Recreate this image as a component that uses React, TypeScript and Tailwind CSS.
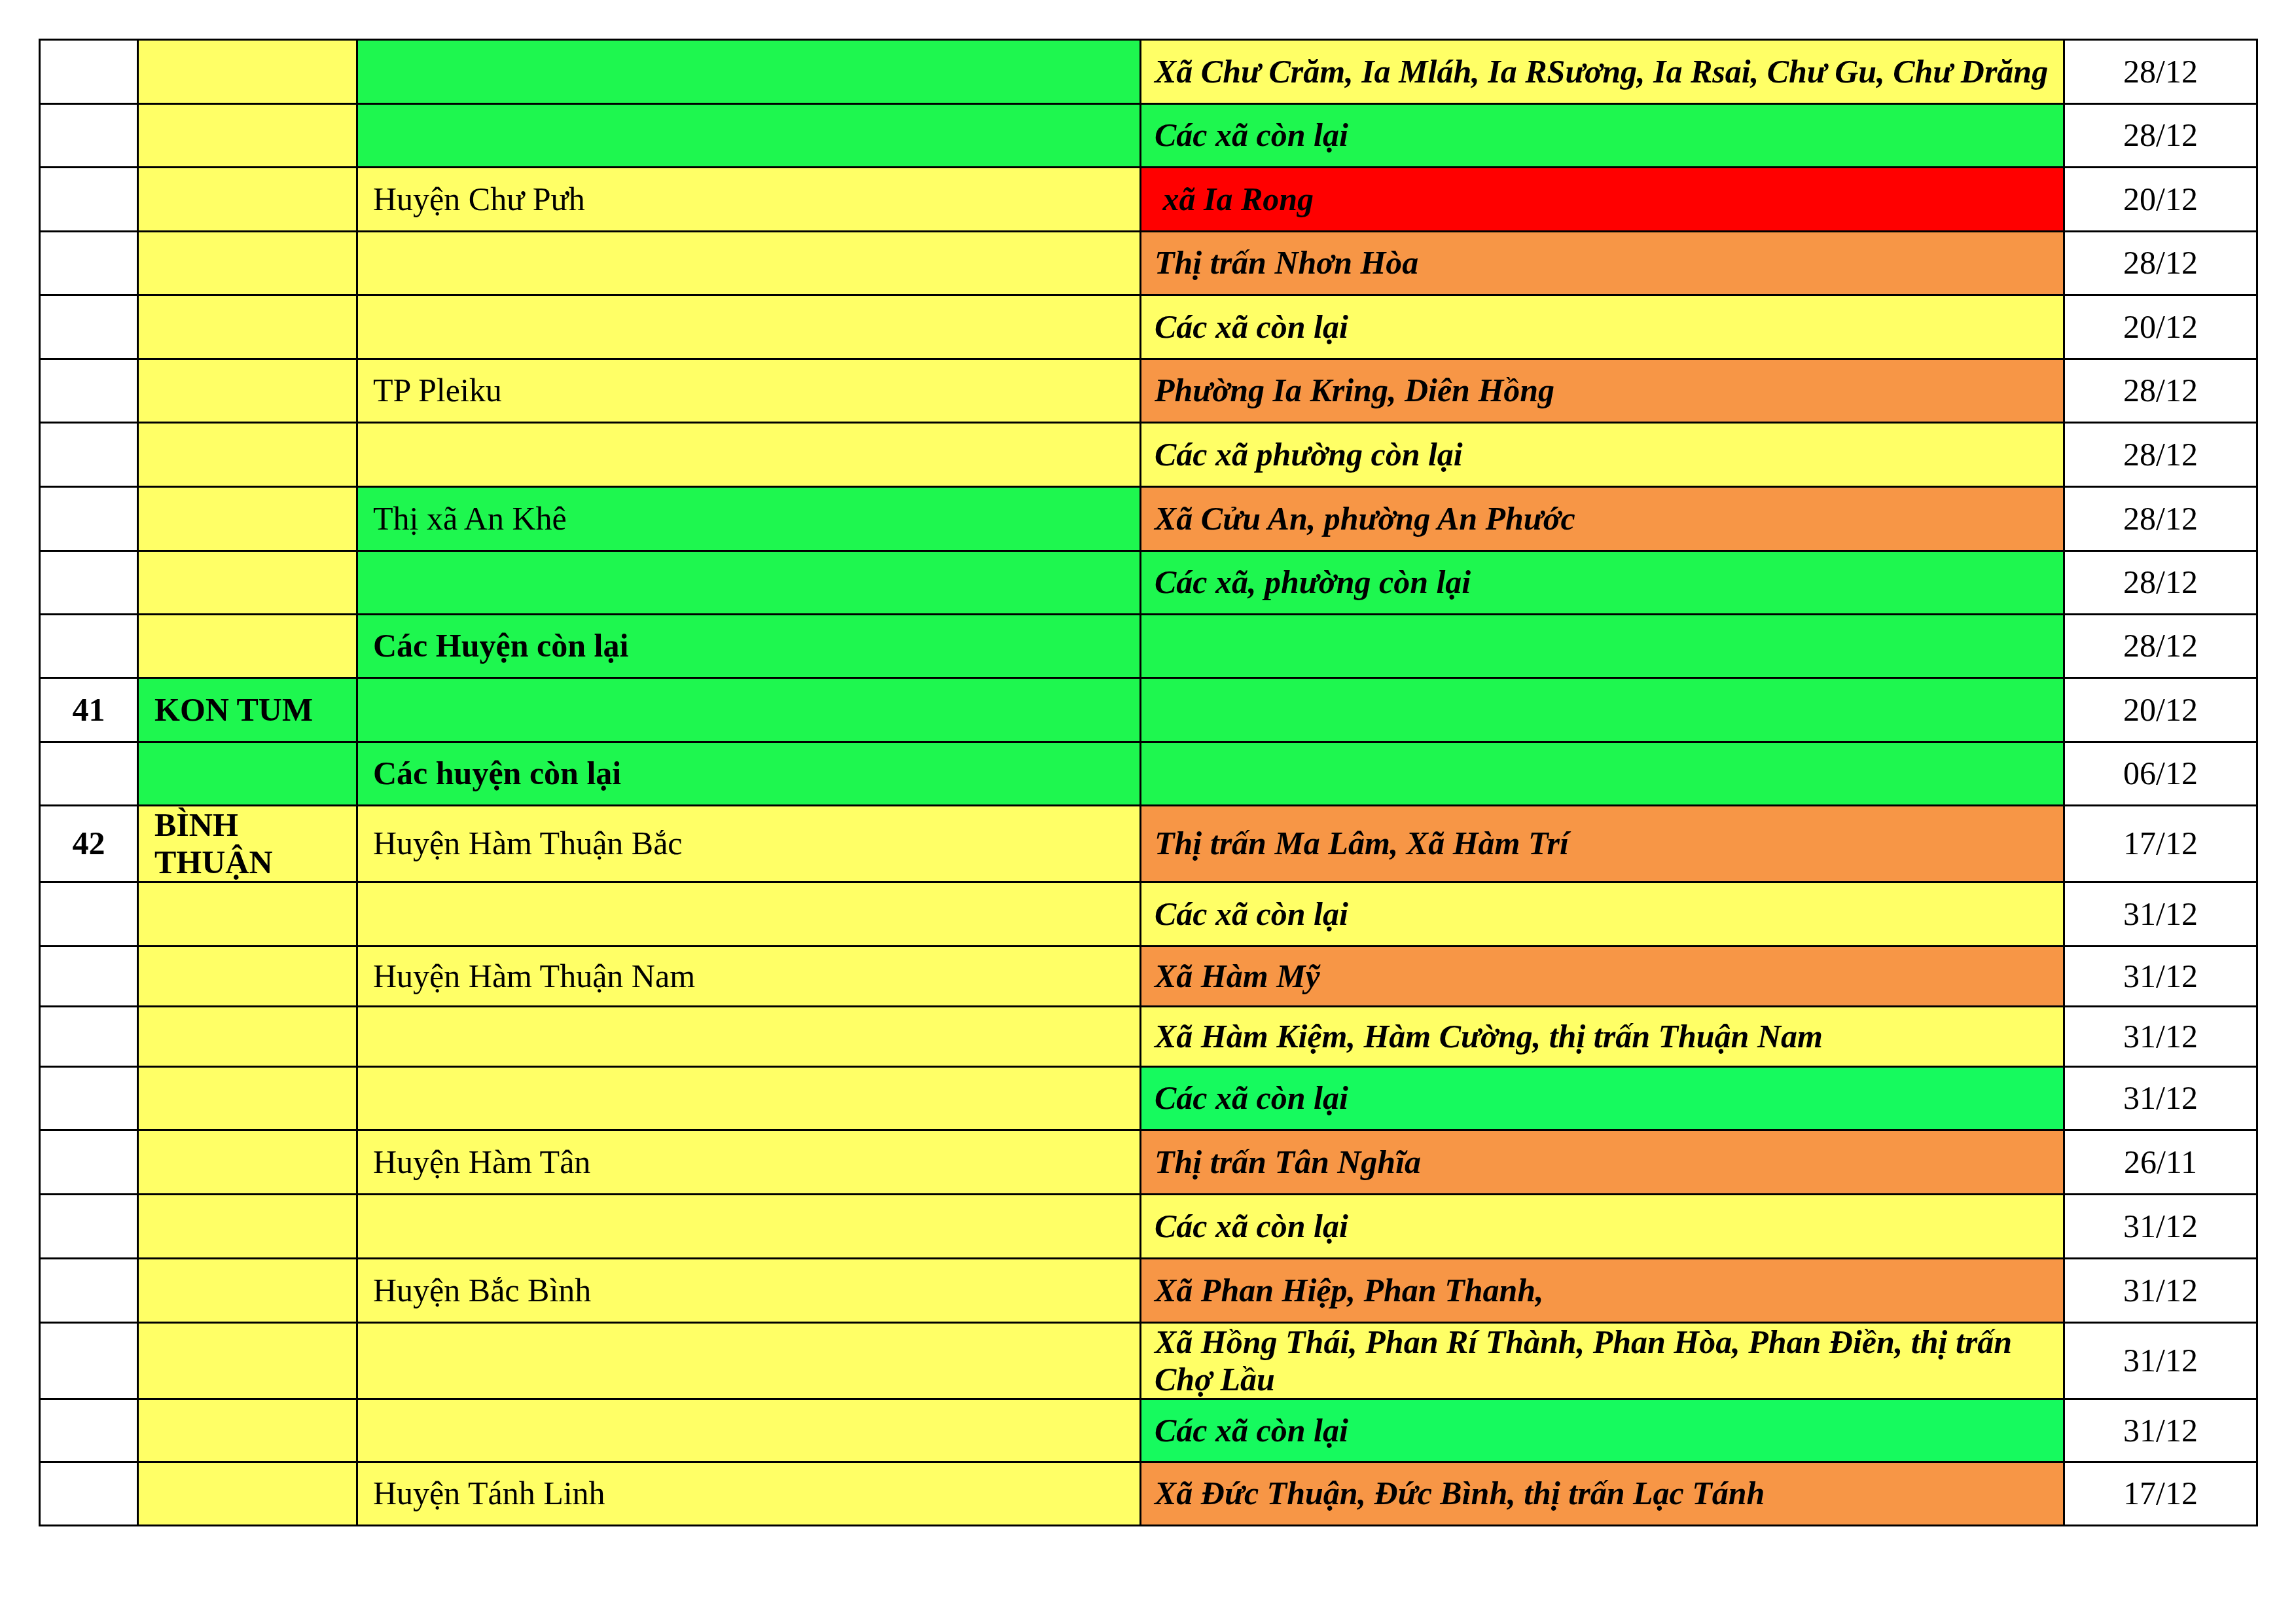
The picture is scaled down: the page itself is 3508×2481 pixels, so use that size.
import React from "react";

type Tone = "w" | "y" | "g" | "g2" | "o" | "r";

const bg: Record<Tone, string> = {
  w: "bg-white",
  y: "bg-[#ffff66]",
  g: "bg-[#1ef74f]",
  g2: "bg-[#16fa5e]",
  o: "bg-[#f79646]",
  r: "bg-[#ff0000]",
};

type Row = {
  h: string;
  no?: string;
  c2: Tone;
  prov?: React.ReactNode;
  c3: Tone;
  dist?: string;
  distBold?: boolean;
  c4: Tone;
  area?: string;
  date: string;
};

const rows: Row[] = [
  { h: "h-[98px]", c2: "y", c3: "g", c4: "y", area: "Xã Chư Crăm, Ia Mláh, Ia RSương, Ia Rsai, Chư Gu, Chư Drăng", date: "28/12" },
  { h: "h-[97px]", c2: "y", c3: "g", c4: "g", area: "Các xã còn lại", date: "28/12" },
  { h: "h-[98px]", c2: "y", c3: "y", dist: "Huyện Chư Pưh", c4: "r", area: "\u00a0xã Ia Rong", date: "20/12" },
  { h: "h-[97px]", c2: "y", c3: "y", c4: "o", area: "Thị trấn Nhơn Hòa", date: "28/12" },
  { h: "h-[98px]", c2: "y", c3: "y", c4: "y", area: "Các xã còn lại", date: "20/12" },
  { h: "h-[97px]", c2: "y", c3: "y", dist: "TP Pleiku", c4: "o", area: "Phường Ia Kring, Diên Hồng", date: "28/12" },
  { h: "h-[98px]", c2: "y", c3: "y", c4: "y", area: "Các xã phường còn lại", date: "28/12" },
  { h: "h-[98px]", c2: "y", c3: "g", dist: "Thị xã An Khê", c4: "o", area: "Xã Cửu An, phường An Phước", date: "28/12" },
  { h: "h-[97px]", c2: "y", c3: "g", c4: "g", area: "Các xã, phường còn lại", date: "28/12" },
  { h: "h-[97px]", c2: "y", c3: "g", dist: "Các Huyện còn lại", distBold: true, c4: "g", date: "28/12" },
  { h: "h-[98px]", no: "41", c2: "g", prov: "KON TUM", c3: "g", c4: "g", date: "20/12" },
  { h: "h-[97px]", c2: "g", c3: "g", dist: "Các huyện còn lại", distBold: true, c4: "g", date: "06/12" },
  { h: "h-[117px]", no: "42", c2: "y", prov: (<>BÌNH<br />THUẬN</>), c3: "y", dist: "Huyện Hàm Thuận Bắc", c4: "o", area: "Thị trấn Ma Lâm, Xã Hàm Trí", date: "17/12" },
  { h: "h-[98px]", c2: "y", c3: "y", c4: "y", area: "Các xã còn lại", date: "31/12" },
  { h: "h-[92px]", c2: "y", c3: "y", dist: "Huyện Hàm Thuận Nam", c4: "o", area: "Xã Hàm Mỹ", date: "31/12" },
  { h: "h-[92px]", c2: "y", c3: "y", c4: "y", area: "Xã Hàm Kiệm, Hàm Cường, thị trấn Thuận Nam", date: "31/12" },
  { h: "h-[97px]", c2: "y", c3: "y", c4: "g2", area: "Các xã còn lại", date: "31/12" },
  { h: "h-[98px]", c2: "y", c3: "y", dist: "Huyện Hàm Tân", c4: "o", area: "Thị trấn Tân Nghĩa", date: "26/11" },
  { h: "h-[98px]", c2: "y", c3: "y", c4: "y", area: "Các xã còn lại", date: "31/12" },
  { h: "h-[98px]", c2: "y", c3: "y", dist: "Huyện Bắc Bình", c4: "o", area: "Xã Phan Hiệp, Phan Thanh,", date: "31/12" },
  { h: "h-[117px]", c2: "y", c3: "y", c4: "y", area: "Xã Hồng Thái, Phan Rí Thành, Phan Hòa, Phan Điền, thị trấn Chợ Lầu", date: "31/12" },
  { h: "h-[96px]", c2: "y", c3: "y", c4: "g2", area: "Các xã còn lại", date: "31/12" },
  { h: "h-[97px]", c2: "y", c3: "y", dist: "Huyện Tánh Linh", c4: "o", area: "Xã Đức Thuận, Đức Bình, thị trấn Lạc Tánh", date: "17/12" },
];

const cell = "border-r-[3px] border-b-[3px] border-black flex items-center";

export default function App() {
  return (
    <div
      className="w-[3508px] h-[2481px] bg-white text-black text-[50px] leading-[1.15]"
      style={{ fontFamily: '"Liberation Serif", "Times New Roman", serif' }}
    >
      <div className="pt-[59px] pl-[59px]">
        <div className="grid grid-cols-[150px_335px_1197px_1411px_295px] w-[3391px] border-l-[3px] border-t-[3px] border-black">
          {rows.map((r, i) => (
            <React.Fragment key={i}>
              <div className={`${cell} ${r.h} bg-white justify-center font-bold`}>{r.no ?? ""}</div>
              <div className={`${cell} ${r.h} ${bg[r.c2]} pl-[24px] font-bold`}>
                <div>{r.prov ?? ""}</div>
              </div>
              <div className={`${cell} ${r.h} ${bg[r.c3]} pl-[23px] ${r.distBold ? "font-bold" : ""}`}>
                {r.dist ?? ""}
              </div>
              <div className={`${cell} ${r.h} ${bg[r.c4]} pl-[20px] pr-[14px] font-bold italic`}>
                <div>{r.area ?? ""}</div>
              </div>
              <div className={`${cell} ${r.h} bg-white justify-center`}>{r.date}</div>
            </React.Fragment>
          ))}
        </div>
      </div>
    </div>
  );
}
